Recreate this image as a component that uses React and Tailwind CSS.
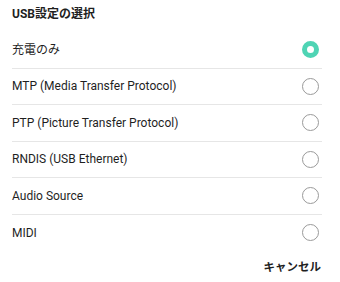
export default function App() {
  const options = [
    { label: "充電のみ", selected: true },
    { label: "MTP (Media Transfer Protocol)" },
    { label: "PTP (Picture Transfer Protocol)" },
    { label: "RNDIS (USB Ethernet)" },
    { label: "Audio Source" },
    { label: "MIDI" },
  ];

  return (
    <div
      className="w-[340px] h-[282px] bg-white text-[#1f1f1f] overflow-hidden"
      style={{ fontFamily: 'Roboto, "Noto Sans CJK JP", sans-serif' }}
    >
      <div className="h-[28px] pl-3 flex items-center text-[12px] font-bold">
        USB設定の選択
      </div>
      <div className="mt-1 pl-3 pr-[18px]">
        {options.map((opt, i) => (
          <div
            key={opt.label}
            className={
              "h-[36.5px] flex items-center justify-between " +
              (i < options.length - 1 ? "border-b border-[#e6e6e6]" : "")
            }
          >
            <span className="text-[12px]">{opt.label}</span>
            {opt.selected ? (
              <span className="w-[17px] h-[17px] mr-[3px] rounded-full border-[5.5px] border-[#4fd4b4] bg-white" />
            ) : (
              <span className="w-[17px] h-[17px] mr-[3px] rounded-full border border-[#9a9a9a]" />
            )}
          </div>
        ))}
      </div>
      <div className="flex justify-end pr-[19px] mt-[8px]">
        <span className="text-[11.5px] font-bold">キャンセル</span>
      </div>
    </div>
  );
}
